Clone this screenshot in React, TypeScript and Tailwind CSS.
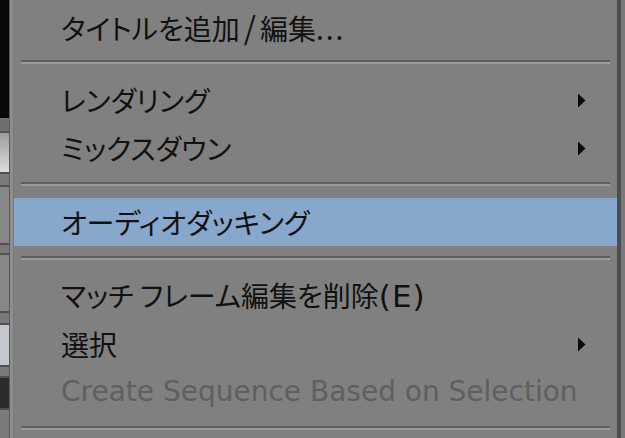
import type { ReactNode } from 'react'

const jp = '"Noto Sans CJK JP", "DejaVu Sans", sans-serif'

type Item = { key: string; label: ReactNode; sub?: boolean; active?: boolean; disabled?: boolean; latin?: boolean }

const groups: Item[][] = [
  [
    {
      key: 'title',
      label: (
        <>
          タイトルを追加<span className="px-[4px] text-[31px]">/</span>編集<span className="tracking-[2px]">...</span>
        </>
      ),
    },
  ],
  [
    { key: 'render', label: 'レンダリング', sub: true },
    { key: 'mix', label: 'ミックスダウン', sub: true },
  ],
  [{ key: 'duck', label: 'オーディオダッキング', active: true }],
  [
    {
      key: 'match',
      label: (
        <>
          マッチ フレーム編集を削除
          <span className="text-[31px] tracking-[1px]" style={{ fontFamily: '"DejaVu Sans", sans-serif' }}>
            (E)
          </span>
        </>
      ),
    },
    { key: 'sel', label: '選択', sub: true },
    { key: 'create', label: 'Create Sequence Based on Selection', disabled: true, latin: true },
  ],
]

function Arrow() {
  return (
    <svg width="9" height="15" viewBox="0 0 9 15" className="mr-[31px]">
      <polygon points="1,0.5 8.5,7.5 1,14.5" fill="#0c0c0c" />
    </svg>
  )
}

function Separator() {
  return (
    <div className="pt-[10px] pb-[12px] pl-[7px] pr-[7px]">
      <div className="h-[2px] bg-[#5e5e5e]" />
      <div className="h-[2px] bg-[#9a9a9a]" />
    </div>
  )
}

function Row({ item }: { item: Item }) {
  return (
    <div className={`flex h-[48px] items-center justify-between ${item.active ? 'bg-[#87a7cc]' : ''}`}>
      <span
        className={`pl-[47px] text-[28px] leading-none whitespace-nowrap ${item.disabled ? 'text-[#5f5f5f]' : 'text-[#111111]'}`}
        style={{ fontFamily: item.latin ? '"DejaVu Sans", sans-serif' : jp, fontFeatureSettings: '"palt"' }}
      >
        {item.label}
      </span>
      {item.sub && <Arrow />}
    </div>
  )
}

function LeftStrip() {
  return (
    <div className="flex w-[9px] flex-col">
      <div className="h-[118px] bg-[#080808]" />
      <div className="h-[13px] bg-[#6f6f6f]" />
      <div className="h-[2px] bg-[#505050]" />
      <div className="h-[39px] bg-gradient-to-b from-[#9c9c9c] to-[#dcdcdc]" />
      <div className="h-[2px] bg-[#505050]" />
      <div className="h-[11px] bg-[#7a7a7a]" />
      <div className="h-[2px] bg-[#505050]" />
      <div className="h-[56px] bg-[#878787]" />
      <div className="h-[2px] bg-[#505050]" />
      <div className="h-[8px] bg-[#7a7a7a]" />
      <div className="h-[2px] bg-[#505050]" />
      <div className="h-[56px] bg-[#878787]" />
      <div className="h-[2px] bg-[#505050]" />
      <div className="h-[10px] bg-[#7a7a7a]" />
      <div className="h-[2px] bg-[#505050]" />
      <div className="h-[40px] bg-[#c4c7cd]" />
      <div className="h-[2px] bg-[#505050]" />
      <div className="h-[9px] bg-[#7a7a7a]" />
      <div className="h-[2px] bg-[#505050]" />
      <div className="h-[30px] bg-[#2a2a2a]" />
      <div className="h-[2px] bg-[#505050]" />
      <div className="flex-1 bg-[#7a7a7a]" />
    </div>
  )
}

export default function App() {
  return (
    <div className="flex h-[438px] w-[625px] overflow-hidden bg-[#7b7b7b]">
      <LeftStrip />
      <div className="w-[1px] bg-[#5a5a5a]" />
      <div className="w-[3px] bg-[#8e8e8e]" />
      <div className="w-[1px] bg-[#7a7a7a]" />
      <div className="flex w-[603px] flex-col bg-[#808080] pt-[2px]">
        {groups.map((g, gi) => (
          <div key={gi}>
            {g.map((it) => (
              <Row key={it.key} item={it} />
            ))}
            <Separator />
          </div>
        ))}
      </div>
      <div className="w-[4px] bg-[#4e4e4e]" />
      <div className="flex-1 bg-[#7a7a7a]" />
    </div>
  )
}
